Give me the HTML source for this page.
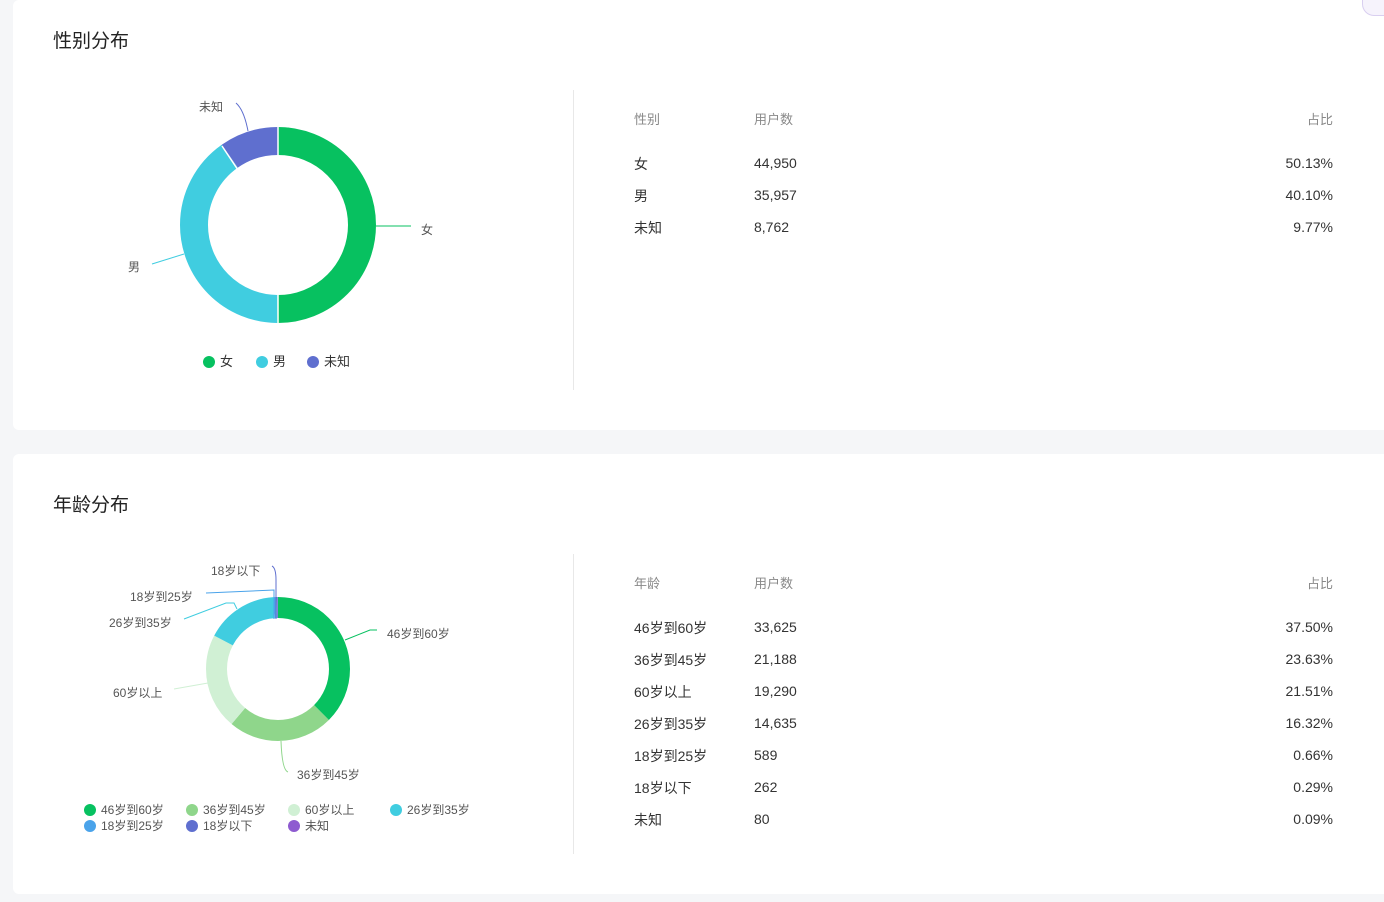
<!DOCTYPE html>
<html><head><meta charset="utf-8"><style>
body{margin:0;background:#f5f6f8;width:1384px;height:902px;overflow:hidden;font-family:"Liberation Sans","Noto Sans CJK SC",sans-serif;color:#333;position:relative}
.card{position:absolute;left:13px;width:1380px;background:#fff;border-radius:6px}
.t{position:absolute;white-space:nowrap}
.h{font-size:19px;color:#222}
.th{font-size:13px;color:#888}
.td{font-size:14px;color:#333}
.r{text-align:right;width:100px}
.lab{font-size:12px;color:#555}
.dot{display:inline-block;width:12px;height:12px;border-radius:50%;vertical-align:-2px;margin-right:5px}
.vl{position:absolute;left:573px;width:1px;background:#e8e8e8}
</style></head><body>
<div class="card" style="top:0;height:430px"></div>
<div class="card" style="top:454px;height:440px"></div>
<div class="t h" style="left:53px;top:26px">性别分布</div>
<div class="t h" style="left:53px;top:490px">年龄分布</div>
<div class="vl" style="top:90px;height:300px"></div>
<div class="vl" style="top:554px;height:300px"></div>

<svg style="position:absolute;left:0;top:0" width="573" height="902">
<g transform="rotate(-90 278 225)" fill="none" stroke-width="28">
<circle cx="278" cy="225" r="84" stroke="#07c160" stroke-dasharray="264.58 600"/>
<circle cx="278" cy="225" r="84" stroke="#40cde0" stroke-dasharray="211.64 600" stroke-dashoffset="-264.58"/>
<circle cx="278" cy="225" r="84" stroke="#5f6fcf" stroke-dasharray="51.57 600" stroke-dashoffset="-476.22"/>
</g>
<g stroke="#fff" stroke-width="1.5"><line x1="278" y1="127" x2="278" y2="155"/><line x1="278" y1="295" x2="278" y2="323"/><line x1="238" y1="170" x2="222" y2="146"/></g>
<path d="M376 226H411" stroke="#07c160" fill="none"/>
<path d="M184 254L152 264" stroke="#40cde0" fill="none"/>
<path d="M248 131Q244 110 236 103" stroke="#5f6fcf" fill="none"/>
<g transform="rotate(-90 278 669)" fill="none" stroke-width="21">
<circle cx="278" cy="669" r="61.5" stroke="#07c160" stroke-dasharray="144.9 600"/>
<circle cx="278" cy="669" r="61.5" stroke="#8fd68b" stroke-dasharray="91.3 600" stroke-dashoffset="-144.9"/>
<circle cx="278" cy="669" r="61.5" stroke="#d0f0d4" stroke-dasharray="83.1 600" stroke-dashoffset="-236.2"/>
<circle cx="278" cy="669" r="61.5" stroke="#40cde0" stroke-dasharray="63.1 600" stroke-dashoffset="-319.3"/>
<circle cx="278" cy="669" r="61.5" stroke="#4aa3ea" stroke-dasharray="2.55 600" stroke-dashoffset="-382.4"/>
<circle cx="278" cy="669" r="61.5" stroke="#5f6fcf" stroke-dasharray="1.12 600" stroke-dashoffset="-384.95"/>
</g>
<path d="M345 640L370 630H377" stroke="#07c160" fill="none"/>
<path d="M281 741Q282 770 288 772" stroke="#8fd68b" fill="none"/>
<path d="M208 683L174 689" stroke="#d0f0d4" fill="none"/>
<path d="M237 609L234 603H226L184 619" stroke="#40cde0" fill="none"/>
<path d="M274 619V590L206 593" stroke="#4aa3ea" fill="none"/>
<path d="M276 619V580Q276 568 272 566" stroke="#5f6fcf" fill="none"/>
</svg>
<div class="t lab" style="left:421px;top:221px">女</div>
<div class="t lab" style="left:128px;top:258px">男</div>
<div class="t lab" style="left:199px;top:98px">未知</div>
<div class="t" style="left:203px;top:351px;font-size:13px"><span class="dot" style="background:#07c160"></span>女</div>
<div class="t" style="left:256px;top:351px;font-size:13px"><span class="dot" style="background:#40cde0"></span>男</div>
<div class="t" style="left:307px;top:351px;font-size:13px"><span class="dot" style="background:#5f6fcf"></span>未知</div>

<div class="t lab" style="left:387px;top:625px">46岁到60岁</div>
<div class="t lab" style="left:297px;top:766px">36岁到45岁</div>
<div class="t lab" style="left:113px;top:684px">60岁以上</div>
<div class="t lab" style="left:109px;top:614px">26岁到35岁</div>
<div class="t lab" style="left:130px;top:588px">18岁到25岁</div>
<div class="t lab" style="left:211px;top:562px">18岁以下</div>
<div class="t lab" style="left:84px;top:801px"><span class="dot" style="background:#07c160"></span>46岁到60岁</div>
<div class="t lab" style="left:186px;top:801px"><span class="dot" style="background:#8fd68b"></span>36岁到45岁</div>
<div class="t lab" style="left:288px;top:801px"><span class="dot" style="background:#d0f0d4"></span>60岁以上</div>
<div class="t lab" style="left:390px;top:801px"><span class="dot" style="background:#40cde0"></span>26岁到35岁</div>
<div class="t lab" style="left:84px;top:817px"><span class="dot" style="background:#4aa3ea"></span>18岁到25岁</div>
<div class="t lab" style="left:186px;top:817px"><span class="dot" style="background:#5f6fcf"></span>18岁以下</div>
<div class="t lab" style="left:288px;top:817px"><span class="dot" style="background:#8e5bd0"></span>未知</div>

<div class="t th" style="left:634px;top:109px">性别</div>
<div class="t th" style="left:754px;top:109px">用户数</div>
<div class="t th r" style="left:1233px;top:109px">占比</div>
<div class="t td" style="left:634px;top:154px">女</div><div class="t td" style="left:754px;top:155px">44,950</div><div class="t td r" style="left:1233px;top:155px">50.13%</div>
<div class="t td" style="left:634px;top:186px">男</div><div class="t td" style="left:754px;top:187px">35,957</div><div class="t td r" style="left:1233px;top:187px">40.10%</div>
<div class="t td" style="left:634px;top:218px">未知</div><div class="t td" style="left:754px;top:219px">8,762</div><div class="t td r" style="left:1233px;top:219px">9.77%</div>

<div class="t th" style="left:634px;top:573px">年龄</div>
<div class="t th" style="left:754px;top:573px">用户数</div>
<div class="t th r" style="left:1233px;top:573px">占比</div>
<div class="t td" style="left:634px;top:618px">46岁到60岁</div><div class="t td" style="left:754px;top:619px">33,625</div><div class="t td r" style="left:1233px;top:619px">37.50%</div>
<div class="t td" style="left:634px;top:650px">36岁到45岁</div><div class="t td" style="left:754px;top:651px">21,188</div><div class="t td r" style="left:1233px;top:651px">23.63%</div>
<div class="t td" style="left:634px;top:682px">60岁以上</div><div class="t td" style="left:754px;top:683px">19,290</div><div class="t td r" style="left:1233px;top:683px">21.51%</div>
<div class="t td" style="left:634px;top:714px">26岁到35岁</div><div class="t td" style="left:754px;top:715px">14,635</div><div class="t td r" style="left:1233px;top:715px">16.32%</div>
<div class="t td" style="left:634px;top:746px">18岁到25岁</div><div class="t td" style="left:754px;top:747px">589</div><div class="t td r" style="left:1233px;top:747px">0.66%</div>
<div class="t td" style="left:634px;top:778px">18岁以下</div><div class="t td" style="left:754px;top:779px">262</div><div class="t td r" style="left:1233px;top:779px">0.29%</div>
<div class="t td" style="left:634px;top:810px">未知</div><div class="t td" style="left:754px;top:811px">80</div><div class="t td r" style="left:1233px;top:811px">0.09%</div>

<div style="position:absolute;left:1362px;top:-20px;width:40px;height:34px;border-radius:12px;background:#f6f3fc;border:1px solid #d9cff0"></div>
</body></html>
